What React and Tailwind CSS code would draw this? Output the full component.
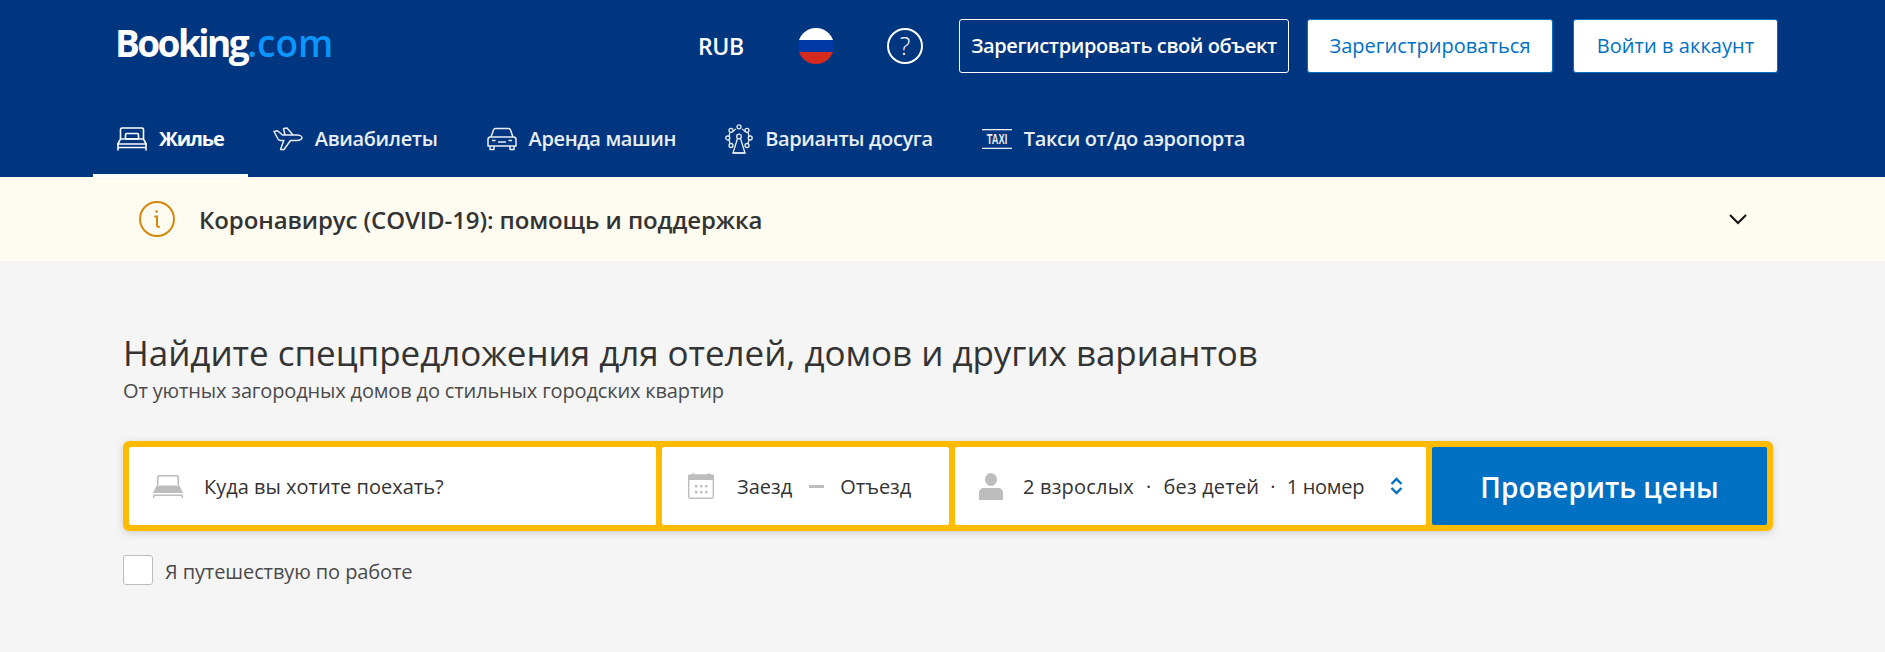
import React from 'react';

const sans = 'font-["Open_Sans","Noto_Sans",sans-serif]';

function BedIcon({ className }) {
  return (
    <svg viewBox="0 0 30 24" className={className} fill="none" stroke="currentColor" strokeWidth="1.6">
      <path d="M3.500 12V2.500A1.500 1.500 0 0 1 5 1h20a1.500 1.500 0 0 1 1.500 1.500V12" />
      <rect x="8.500" y="6.500" width="13" height="5.500" rx="1.200" />
      <path d="M3.500 12h23l2.700 5H.8l2.700-5z" />
      <path d="M1 17v6.500M29 17v6.500M1 20.500h28" />
    </svg>
  );
}

function SolidBed({ className }) {
  return (
    <svg viewBox="0 0 30 23" className={className} fill="currentColor">
      <path d="M4 10V2a2 2 0 0 1 2-2h18a2 2 0 0 1 2 2v8h-1.500V2.500a1 1 0 0 0-1-1H6.500a1 1 0 0 0-1 1V10z" />
      <path d="M3.500 10.500h23L30 18H0z" />
      <path d="M0 19.500h30V23h-1.500v-2h-27v2H0z" />
    </svg>
  );
}

function PlaneIcon({ className }) {
  return (
    <svg viewBox="0 0 30 24" className={className} fill="none" stroke="currentColor" strokeWidth="1.5" strokeLinejoin="round">
      <path d="M1 4.500l3.500-.8 5 4.300h14.500c2.800 0 5 1.300 5 2.700s-2.200 2.800-5 2.800h-6.500l-6.500 9h-3.500l3.300-9H7.500c-1.200 0-2-.6-2.500-1.500L1 4.500z" />
      <path d="M12 8l-1.500-6.500 3.500-.5 6 7" />
    </svg>
  );
}

function CarIcon({ className }) {
  return (
    <svg viewBox="0 0 30 24" className={className} fill="none" stroke="currentColor" strokeWidth="1.5" strokeLinejoin="round">
      <path d="M4 10l2.500-7c.3-.9 1-1.500 2-1.500h13c1 0 1.700.6 2 1.500L26 10" />
      <path d="M3.500 10h23c1.400 0 2.500 1.100 2.500 2.500V19H1v-6.500C1 11.100 2.100 10 3.500 10z" />
      <path d="M3 19v3.500h4V19M23 19v3.500h4V19" />
      <path d="M5 13.500h3.500M21.500 13.500H25M11 15h8" />
    </svg>
  );
}

function WheelIcon({ className }) {
  return (
    <svg viewBox="0 0 28 30" className={className} fill="none" stroke="currentColor" strokeWidth="1.3" strokeLinejoin="round">
      <circle cx="14" cy="2.800" r="2" />
      <circle cx="6" cy="6.300" r="2" />
      <circle cx="22" cy="6.300" r="2" />
      <circle cx="2.800" cy="14" r="2" />
      <circle cx="25.200" cy="14" r="2" />
      <circle cx="6" cy="21.500" r="2" />
      <circle cx="22" cy="21.500" r="2" />
      <circle cx="14" cy="12.500" r="2.300" />
      <path d="M8 7.500a9.500 9.500 0 0 1 3-2.500M17 5a9.500 9.500 0 0 1 3 2.500M5 8.300L4 12M23 8.300l1 3.700M4 16l1 3.500M24 16l-1 3.500" />
      <path d="M12.500 14.500L8 29h12l-4.500-14.500" />
      <path d="M7.500 29h13" />
    </svg>
  );
}

function TaxiIcon({ className }) {
  return (
    <svg viewBox="0 0 30 20" className={className}>
      <rect x="0" y="0" width="30" height="1.300" fill="currentColor" />
      <rect x="0" y="18.700" width="30" height="1.300" fill="currentColor" />
      <text transform="translate(15 15) scale(0.85 1.35)" textAnchor="middle" fontSize="11" fontFamily="Liberation Sans, sans-serif" fill="currentColor">TAXI</text>
    </svg>
  );
}

function CalendarIcon({ className }) {
  return (
    <svg viewBox="0 0 26 26" className={className}>
      <rect x="0.700" y="2" width="24.600" height="23.300" rx="1.500" fill="#fff" stroke="#bdbdbd" strokeWidth="1.400" />
      <rect x="0" y="2" width="26" height="5" rx="1" fill="#bdbdbd" />
      <rect x="4.500" y="0" width="1.400" height="3" fill="#bdbdbd" />
      <rect x="20" y="0" width="1.400" height="3" fill="#bdbdbd" />
      {[7, 12, 17].map(x => [12, 18].map(y => (
        <rect key={`${x}-${y}`} x={x} y={y} width="2.400" height="2.400" fill="#bdbdbd" />
      )))}
    </svg>
  );
}

function PersonIcon({ className }) {
  return (
    <svg viewBox="0 0 24 27" className={className} fill="#bdbdbd">
      <ellipse cx="12" cy="6.500" rx="6" ry="6.500" />
      <path d="M0 27v-7c0-3 2-5 5-5h14c3 0 5 2 5 5v7z" />
    </svg>
  );
}

function NavItem({ icon, label, active }) {
  return (
    <div className={`flex h-full items-center gap-3 px-6 pb-[2px] border-b-[3px] ${active ? 'border-white text-white font-bold' : 'border-transparent text-[#e9eef5] font-semibold'}`}>
      {icon}
      <span className={`text-[20px] whitespace-nowrap ${active ? 'tracking-[-1.1px]' : 'tracking-[-0.35px]'}`}>{label}</span>
    </div>
  );
}

export default function App() {
  return (
    <div className={`${sans} min-h-[652px] bg-[#f5f5f5] text-[#333]`}>
      <header className="bg-[#003580] h-[177px] text-white">
        <div className="flex items-start pl-[115px] pr-[107px] pt-[19px] h-[105px]">
          <div className="text-[37px] font-bold leading-[48px] tracking-[-2.6px] whitespace-nowrap">
            Booking<span className="text-[#0a96ff] font-semibold tracking-[0px]">.com</span>
          </div>
          <div className="ml-auto flex items-center h-[54px]">
            <span className="text-[23px] font-semibold tracking-[-0.3px] mr-[54px]">RUB</span>
            <div className="w-9 h-9 rounded-full overflow-hidden flex flex-col mr-[53px] -mt-[1px]">
              <div className="h-3 bg-white" />
              <div className="h-3 bg-[#0039a6]" />
              <div className="h-3 bg-[#d52b1e]" />
            </div>
            <div className="w-9 h-9 rounded-full border-2 border-white flex items-center justify-center text-[25px] font-light leading-none mr-[36px] -mt-[1px]">?</div>
            <button className="h-[54px] w-[330px] rounded-[3px] border border-white text-[20px] font-semibold tracking-[-0.4px] whitespace-nowrap">Зарегистрировать свой объект</button>
            <button className="h-[54px] w-[246px] ml-[18px] rounded-[3px] border border-[#0071c2] bg-white text-[#0071c2] text-[20px] font-medium tracking-[0.05px] whitespace-nowrap">Зарегистрироваться</button>
            <button className="h-[54px] w-[205px] ml-[20px] rounded-[3px] border border-[#0071c2] bg-white text-[#0071c2] text-[20px] font-medium tracking-[0.05px] whitespace-nowrap">Войти в аккаунт</button>
          </div>
        </div>
        <nav className="flex items-center h-[72px] pl-[93px] gap-px">
          <NavItem active label="Жилье" icon={<BedIcon className="w-[30px] h-6" />} />
          <NavItem label="Авиабилеты" icon={<PlaneIcon className="w-[30px] h-6" />} />
          <NavItem label="Аренда машин" icon={<CarIcon className="w-[30px] h-6" />} />
          <NavItem label="Варианты досуга" icon={<WheelIcon className="w-[28px] h-[30px]" />} />
          <NavItem label="Такси от/до аэропорта" icon={<TaxiIcon className="w-[30px] h-5" />} />
        </nav>
      </header>

      <div className="bg-[#fefbf0] h-[84px] flex items-center pl-[139px] pr-[138px]">
        <svg viewBox="0 0 36 36" className="w-9 h-9" fill="none" stroke="#d4880b" strokeWidth="2">
          <circle cx="18" cy="18" r="17" />
          <path d="M16 15.500h2v8.500c0 1.300.7 2 2 2" strokeLinecap="round" />
          <circle cx="17.600" cy="10.500" r="1.300" fill="#d4880b" stroke="none" />
        </svg>
        <span className="ml-[24px] mt-[2px] text-[24px] font-semibold tracking-[-0.1px] text-[#333]">Коронавирус (COVID-19): помощь и поддержка</span>
        <svg viewBox="0 0 18 11" className="ml-auto w-[18px] h-[11px]" fill="none" stroke="#111" strokeWidth="2">
          <path d="M1 1l8 8 8-8" />
        </svg>
      </div>

      <main className="pl-[123px] pr-[112px] pt-[70px]">
        <h1 className="text-[35px] leading-[44px] font-medium tracking-[-0.05px] text-[#333] whitespace-nowrap">Найдите спецпредложения для отелей, домов и других вариантов</h1>
        <p className="text-[20px] leading-[26px] tracking-[-0.15px] text-[#4a4a4a] mt-[3px]">От уютных загородных домов до стильных городских квартир</p>

        <div className="mt-[37px] flex gap-1.5 p-1.5 h-[90px] bg-[#febb02] rounded-[6px] shadow-[0_2px_8px_rgba(0,0,0,0.16)]">
          <div className="w-[527px] bg-white rounded-[2px] flex items-center pl-6 text-[#333] text-[20px]">
            <SolidBed className="w-[30px] h-[23px] text-[#bdbdbd]" />
            <span className="ml-[21px] mt-[2px]">Куда вы хотите поехать?</span>
          </div>
          <div className="w-[287px] bg-white rounded-[2px] flex items-center pl-[26px] text-[20px]">
            <CalendarIcon className="w-[26px] h-[26px]" />
            <span className="ml-[23px] mt-[2px]">Заезд</span>
            <span className="ml-[17px] w-[15px] h-[3px] shrink-0 bg-[#bdbdbd]" />
            <span className="ml-[16px] mt-[2px]">Отъезд</span>
          </div>
          <div className="w-[471px] bg-white rounded-[2px] flex items-center pl-6 text-[20px] tracking-[0.2px] whitespace-nowrap">
            <PersonIcon className="w-6 h-[27px]" />
            <span className="ml-[20px] mt-[2px]">2 взрослых</span>
            <span className="mx-[12px] mt-[2px]">·</span>
            <span className="mt-[2px]">без детей</span>
            <span className="mx-[11px] mt-[2px]">·</span>
            <span className="mt-[2px] tracking-[-0.3px]">1 номер</span>
            <svg viewBox="0 0 13 18" className="ml-auto mr-[23px] w-[13px] h-[18px]" fill="none" stroke="#0071c2" strokeWidth="2.400">
              <path d="M1.500 7l5-5 5 5M1.500 11l5 5 5-5" />
            </svg>
          </div>
          <button className="w-[335px] pt-[2px] bg-[#0071c2] rounded-[2px] text-white text-[28px] font-semibold whitespace-nowrap">Проверить цены</button>
        </div>

        <label className="flex items-center mt-6 h-[30px]">
          <span className="w-[30px] h-[30px] bg-white border border-[#bdbdbd] rounded-[3px]" />
          <span className="ml-3 mt-[3px] text-[20px] tracking-[-0.1px] text-[#4a4a4a]">Я путешествую по работе</span>
        </label>
      </main>
    </div>
  );
}
